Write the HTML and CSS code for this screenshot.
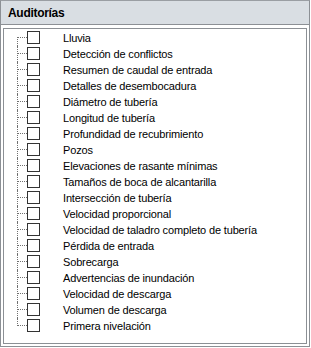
FILE: index.html
```html
<!DOCTYPE html>
<html lang="es">
<head>
    <meta charset="UTF-8">
    <title>Auditorías</title>
    <link rel="stylesheet" href="styles.css">
</head>
<body>
    <div class="panel">
        <div class="panel-header">Auditorías</div>
        <div class="panel-body">
            <ul class="tree">
                <li class="tree-item"><span class="check"></span><span class="label">Lluvia</span></li>
                <li class="tree-item"><span class="check"></span><span class="label">Detección de conflictos</span></li>
                <li class="tree-item"><span class="check"></span><span class="label">Resumen de caudal de entrada</span></li>
                <li class="tree-item"><span class="check"></span><span class="label">Detalles de desembocadura</span></li>
                <li class="tree-item"><span class="check"></span><span class="label">Diámetro de tubería</span></li>
                <li class="tree-item"><span class="check"></span><span class="label">Longitud de tubería</span></li>
                <li class="tree-item"><span class="check"></span><span class="label">Profundidad de recubrimiento</span></li>
                <li class="tree-item"><span class="check"></span><span class="label">Pozos</span></li>
                <li class="tree-item"><span class="check"></span><span class="label">Elevaciones de rasante mínimas</span></li>
                <li class="tree-item"><span class="check"></span><span class="label">Tamaños de boca de alcantarilla</span></li>
                <li class="tree-item"><span class="check"></span><span class="label">Intersección de tubería</span></li>
                <li class="tree-item"><span class="check"></span><span class="label">Velocidad proporcional</span></li>
                <li class="tree-item"><span class="check"></span><span class="label">Velocidad de taladro completo de tubería</span></li>
                <li class="tree-item"><span class="check"></span><span class="label">Pérdida de entrada</span></li>
                <li class="tree-item"><span class="check"></span><span class="label">Sobrecarga</span></li>
                <li class="tree-item"><span class="check"></span><span class="label">Advertencias de inundación</span></li>
                <li class="tree-item"><span class="check"></span><span class="label">Velocidad de descarga</span></li>
                <li class="tree-item"><span class="check"></span><span class="label">Volumen de descarga</span></li>
                <li class="tree-item"><span class="check"></span><span class="label">Primera nivelación</span></li>
            </ul>
        </div>
    </div>
</body>
</html>
```

FILE: styles.css
```css
* {
    margin: 0;
    padding: 0;
    box-sizing: border-box;
}

body {
    margin: 0;
    background: #ffffff;
    font-family: 'Liberation Sans', Arial, sans-serif;
    font-size: 11px;
    color: #000000;
}

.panel {
    width: 310px;
    height: 347px;
    border: 1px solid #8c9095;
    border-top: 1px solid #9a9ea3;
    background: #ffffff;
}

.panel-header {
    height: 24px;
    background: #d9dee3;
    border-bottom: 1px solid #8c9095;
    font-weight: bold;
    font-size: 12px;
    letter-spacing: -0.3px;
    line-height: 24px;
    padding-left: 7px;
}

.panel-body {
    margin: 3px 2px 2px 2px;
    height: 316px;
    border: 1px solid #8c9095;
    padding-top: 1px;
}

.tree {
    list-style: none;
}

.tree-item {
    position: relative;
    display: flex;
    align-items: center;
    height: 16px;
    padding-left: 23px;
}

/* lineas punteadas del arbol */
.tree-item::before {
    content: '';
    position: absolute;
    left: 13px;
    top: 0;
    bottom: 0;
    border-left: 1px dotted #707070;
}

.tree-item:first-child::before {
    top: 7px;
}

.tree-item:last-child::before {
    bottom: 8px;
}

.tree-item::after {
    content: '';
    position: absolute;
    left: 13px;
    top: 7px;
    width: 10px;
    border-top: 1px dotted #707070;
}

.check {
    width: 13px;
    height: 13px;
    border: 1px solid #333333;
    background: #ffffff;
    margin-top: -2px;
    flex-shrink: 0;
}

.label {
    margin-left: 23px;
    line-height: 16px;
    letter-spacing: -0.15px;
    white-space: nowrap;
}
```
